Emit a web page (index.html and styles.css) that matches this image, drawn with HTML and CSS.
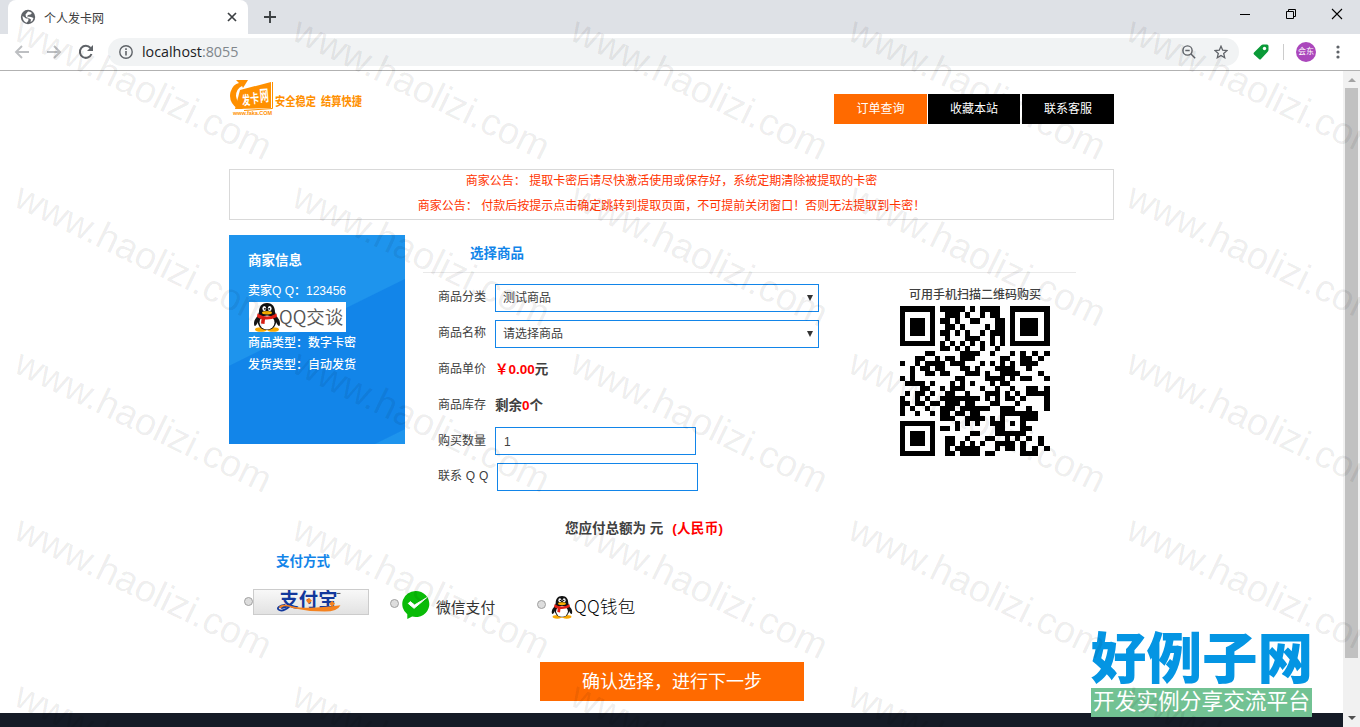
FILE: index.html
```html
<!DOCTYPE html>
<html lang="zh-CN">
<head>
    <meta charset="UTF-8">
    <title>个人发卡网</title>
    <link rel="stylesheet" href="styles.css">
</head>
<body>

<svg width="0" height="0" class="defs">
    <symbol id="penguin" viewBox="0 0 28 30">
        <ellipse cx="8" cy="27.5" rx="6" ry="2.3" fill="#f9a800"/>
        <ellipse cx="20" cy="27.5" rx="6" ry="2.3" fill="#f9a800"/>
        <path d="M6 13C2 16 0 20 1.500 24C3 24 4 22 5 20zM22 13C26 16 28 20 26.500 24C25 24 24 22 23 20z" fill="#151515"/>
        <path d="M14 1C8 1 6 5.500 6 10C3 17 4 28 14 28C24 28 25 17 22 10C22 5.500 20 1 14 1z" fill="#111"/>
        <ellipse cx="14" cy="20.500" rx="7.500" ry="7" fill="#fff"/>
        <ellipse cx="11.300" cy="6.500" rx="1.900" ry="2.500" fill="#fff"/>
        <ellipse cx="16.700" cy="6.500" rx="1.900" ry="2.500" fill="#fff"/>
        <circle cx="11.900" cy="6.800" r=".9"/><circle cx="16.200" cy="6.800" r=".9"/>
        <ellipse cx="14" cy="10.800" rx="5" ry="1.700" fill="#fbb100"/>
        <path d="M4.500 11.500Q14 17.500 23.500 11.500L24 15Q18 18 12 17.500L11.500 22L8 21.500L8.500 17Q6 16.500 4 15z" fill="#e21f14"/>
    </symbol>
</svg>

<div class="tabstrip">
    <div class="tab">
        <svg class="globe" viewBox="0 0 16 16"><circle cx="8" cy="8" r="7.200" fill="#5f6368"/><path d="M2.500 7Q4 7.500 6 9.500H8.500Q9 12 6.500 13.700Q2.500 12 2.500 7zM8 2.500Q10 2.200 12 4L10.500 5.500L8 6L7 7.500L11 8L13.500 9Q13 12 10.500 13L11 10.500L9 9.300L6 8L5.500 5.500z" fill="#fff"/></svg>
        <span class="tab-title">个人发卡网</span>
        <svg class="tab-close" viewBox="0 0 10 10"><path d="M1 1L9 9M9 1L1 9" stroke="#3c4043" stroke-width="1.700"/></svg>
    </div>
    <svg class="tab-new" viewBox="0 0 12 12"><path d="M6 0V12M0 6H12" stroke="#3c4043" stroke-width="1.900"/></svg>
    <div class="window-buttons">
        <svg viewBox="0 0 12 12"><path d="M1 6.500H11" stroke="#000"/></svg>
        <svg viewBox="0 0 12 12"><path d="M1.500 3.500H8.500V10.500H1.500zM3.500 3V1.500H10.500V8.500H9" fill="none" stroke="#000"/></svg>
        <svg viewBox="0 0 12 12"><path d="M1 1L11 11M11 1L1 11" stroke="#000" stroke-width="1.100"/></svg>
    </div>
</div>

<div class="toolbar">
    <svg class="nav-icon" viewBox="0 0 16 16"><path d="M15 8H2M8 2L2 8L8 14" fill="none" stroke="#bdbfc2" stroke-width="1.900"/></svg>
    <svg class="nav-icon" viewBox="0 0 16 16"><path d="M1 8H14M8 2L14 8L8 14" fill="none" stroke="#bdbfc2" stroke-width="1.900"/></svg>
    <svg class="nav-icon" viewBox="0 0 16 16"><path d="M13.500 10A6 6 0 1 1 12.500 4" fill="none" stroke="#5f6368" stroke-width="2"/><path d="M15 1V7H9z" fill="#5f6368"/></svg>
    <div class="address">
        <svg class="info" viewBox="0 0 14 14"><circle cx="7" cy="7" r="6.200" fill="none" stroke="#5f6368" stroke-width="1.400"/><path d="M7 6V10.500M7 3.300V4.900" stroke="#5f6368" stroke-width="1.600"/></svg>
        <span class="url">localhost<span>:8055</span></span>
        <svg class="zoom-out" viewBox="0 0 14 14"><circle cx="5.500" cy="5.500" r="4.600" fill="none" stroke="#5f6368" stroke-width="1.400"/><path d="M9 9L13.200 13.200M3.300 5.500H7.700" stroke="#5f6368" stroke-width="1.400"/></svg>
        <svg class="star" viewBox="0 0 14 14"><path d="M7 1.200L8.700 5.200L13 5.600L9.700 8.400L10.700 12.700L7 10.400L3.300 12.700L4.300 8.400L1 5.600L5.300 5.200z" fill="none" stroke="#5f6368" stroke-width="1.300"/></svg>
    </div>
    <svg class="tag" viewBox="0 0 16 16"><path d="M8 1.500Q9 .5 10 .5H14Q15.500 .5 15.500 2V6Q15.500 7 14.500 8L8 15Q7 16 6 15L1 10.500Q0 9.500 1 8.500z" fill="#0b9a38"/><circle cx="11.500" cy="4.500" r="1.700" fill="#fff"/></svg>
    <span class="divider"></span>
    <span class="avatar">会东</span>
    <svg class="menu-dots" viewBox="0 0 4 14"><g fill="#5f6368"><circle cx="2" cy="2" r="1.600"/><circle cx="2" cy="7" r="1.600"/><circle cx="2" cy="12" r="1.600"/></g></svg>
</div>

<div class="viewport">
    <div class="page">
        <div class="container">
            <div class="header">
                <svg class="logo" viewBox="0 0 134 40">
                    <path d="M11 12L42 4V30L6 31z" fill="#ff9000"/>
                    <path d="M43.500 4V30.500L15 32.500" fill="none" stroke="#ff9000"/>
                    <path d="M9 31Q-1 24 1.500 14Q4 6 10 5L7 2L19 2L14 10L13 8Q7 11 7 18Q8 25 14 31z" fill="#ff9000"/>
                    <g transform="rotate(-5 28 20)" fill="#fff" font-weight="bold"><text x="13" y="26" font-size="13" textLength="8" lengthAdjust="spacingAndGlyphs">发</text><text x="21" y="25" font-size="13" textLength="9" lengthAdjust="spacingAndGlyphs">卡</text><text x="31" y="24" font-size="16" textLength="9" lengthAdjust="spacingAndGlyphs">网</text></g>
                    <text x="4" y="37" class="logo-url" textLength="39">www.faka.COM</text>
                    <text x="46" y="28" class="logo-text" textLength="41" lengthAdjust="spacingAndGlyphs">安全稳定</text>
                    <text x="92" y="28" class="logo-text" textLength="41" lengthAdjust="spacingAndGlyphs">结算快捷</text>
                </svg>
                <div class="menu">
                    <a class="active">订单查询</a>
                    <a>收藏本站</a>
                    <a>联系客服</a>
                </div>
            </div>

            <div class="notice">
                <p>商家公告： 提取卡密后请尽快激活使用或保存好，系统定期清除被提取的卡密</p>
                <p class="second">商家公告： 付款后按提示点击确定跳转到提取页面，不可提前关闭窗口！否则无法提取到卡密！</p>
            </div>

            <div class="main">
                <div class="seller">
                    <h3>商家信息</h3>
                    <p>卖家Q Q：123456</p>
                    <div class="qq-chat"><svg><use href="#penguin"/></svg><span>QQ交谈</span></div>
                    <p>商品类型：数字卡密</p>
                    <p>发货类型：自动发货</p>
                </div>

                <div class="order">
                    <h3>选择商品</h3>
                    <div class="order-body">
                        <div class="fields">
                            <div class="row"><label>商品分类</label><div class="select"><span>测试商品</span><i></i></div></div>
                            <div class="row"><label>商品名称</label><div class="select"><span>请选择商品</span><i></i></div></div>
                            <div class="row"><label>商品单价</label><b><em>￥0.00</em>元</b></div>
                            <div class="row"><label>商品库存</label><b>剩余<em>0</em>个</b></div>
                            <div class="row"><label>购买数量</label><div class="input">1</div></div>
                            <div class="row qq"><label>联系 Q Q</label><div class="input"></div></div>
                        </div>
                        <div class="qr">
                            <span>可用手机扫描二维码购买</span>
                            <svg id="qrcode" viewBox="0 0 150 150" shape-rendering="crispEdges"></svg>
                        </div>
                    </div>
                </div>
            </div>

            <div class="total">您应付总额为 元<em>(人民币)</em></div>

            <h3 class="pay-title">支付方式</h3>
            <div class="pay">
                <span class="radio alipay-radio"></span>
                <div class="alipay">
                    <svg viewBox="0 0 116 26">
                        <text x="26" y="17.500" class="alipay-text" textLength="59" lengthAdjust="spacingAndGlyphs">支付宝</text>
                        <path d="M32 15Q22 17 25 20Q29 23 37 16" fill="none" stroke="#12389c" stroke-width="1.800"/>
                        <path d="M25 18Q27 13 39 16.500Q55 20 88 15.500Q85 22 72 22Q56 22 40 18.500Q31 15 28 18z" fill="#f5821f"/>
                        <path d="M56 8L59 11L56 14L53 11zM79.500 11L82.500 14L79.500 17L76.500 14z" fill="#f5821f"/>
                        <path d="M84 3.500H88" stroke="#333" stroke-width=".8"/>
                    </svg>
                </div>
                <span class="radio wechat-radio"></span>
                <svg class="wechat" viewBox="0 0 30 30"><path d="M14.500 1A14 13.500 0 1 1 11 27.500L6 30V25A14 13.500 0 0 1 14.500 1z" fill="#09bb07"/><path d="M7 14L13 19L26 8L13.500 15.500L9 12z" fill="#fff" stroke="#fff"/></svg>
                <span class="wechat-text">微信支付</span>
                <span class="radio qq-radio"></span>
                <svg class="qq-icon"><use href="#penguin"/></svg>
                <span class="qq-text">QQ钱包</span>
            </div>

            <button class="submit">确认选择，进行下一步</button>
        </div>
        <div class="footer"></div>
    </div>
    <div class="scrollbar">
        <i class="up"></i>
        <div class="thumb"></div>
        <i class="down"></i>
    </div>
</div>

<div class="site-mark">
    <svg class="mark-name" viewBox="0 0 224 60"><text x="-3" y="50" textLength="230" lengthAdjust="spacingAndGlyphs">好例子网</text></svg>
    <div class="mark-slogan">开发实例分享交流平台</div>
</div>

<svg class="watermark" id="watermark" width="1360" height="727"></svg>

<script src="script.js"></script>
</body>
</html>
```

FILE: styles.css
```css
* {
    box-sizing: border-box;
}

body {
    margin: 0;
    width: 1360px;
    height: 727px;
    overflow: hidden;
    display: flex;
    flex-direction: column;
    font: 12px "Liberation Sans", "Noto Sans CJK SC", sans-serif;
    color: #404040;
    background: #fff;
}

h3, p {
    margin: 0;
}

svg {
    display: block;
    flex: none;
}

em {
    font-style: normal;
    color: #f00;
}

.defs {
    position: absolute;
}

/* browser window */
.tabstrip {
    height: 34px;
    flex: none;
    display: flex;
    align-items: center;
    padding-left: 8px;
    background: #dee1e6;
}

.tab {
    width: 240px;
    height: 34px;
    display: flex;
    align-items: center;
    padding: 0 11px 0 12px;
    border-radius: 8px 8px 0 0;
    background: #fff;
}

.globe {
    width: 16px;
    height: 16px;
}

.tab-title {
    flex: 1;
    margin-left: 8px;
}

.tab-close {
    width: 10px;
    height: 10px;
}

.tab-new {
    width: 12px;
    height: 12px;
    margin-left: 16px;
}

.window-buttons {
    display: flex;
    gap: 34px;
    margin: -6px 17px 0 auto;
}

.window-buttons svg {
    width: 12px;
    height: 12px;
}

.toolbar {
    height: 37px;
    flex: none;
    display: flex;
    align-items: center;
    padding-left: 14px;
    border-bottom: 1px solid #b2b2b2;
}

.nav-icon {
    width: 16px;
    height: 16px;
    margin-right: 16px;
}

.address {
    width: 1131px;
    height: 28px;
    margin-left: -2px;
    display: flex;
    align-items: center;
    padding: 0 11px;
    border-radius: 14px;
    background: #f1f3f4;
}

.info {
    width: 14px;
    height: 14px;
}

.url {
    flex: 1;
    margin: -2px 0 0 9px;
    font: 14.3px "Open Sans", sans-serif;
    color: #202124;
}

.url span {
    color: #80868b;
}

.zoom-out {
    width: 14px;
    height: 14px;
    margin-right: 18px;
}

.star {
    width: 14px;
    height: 14px;
}

.tag {
    width: 16px;
    height: 16px;
    margin-left: 14px;
}

.divider {
    width: 1px;
    height: 16px;
    margin: 0 12px 0 14px;
    background: #ccc;
}

.avatar {
    width: 20px;
    height: 20px;
    border-radius: 50%;
    background: #ab47bc;
    color: #fff;
    font-size: 8px;
    line-height: 20px;
    text-align: center;
}

.menu-dots {
    width: 4px;
    height: 14px;
    margin-left: 20px;
}

.viewport {
    height: 656px;
    display: flex;
}

.page {
    width: 1343px;
    display: flex;
    flex-direction: column;
}

.container {
    width: 885px;
    height: 642px;
    margin-left: 229px;
}

.footer {
    height: 14px;
    background: #151b26;
}

.scrollbar {
    width: 17px;
    display: flex;
    flex-direction: column;
    align-items: center;
    background: #f1f1f1;
}

.scrollbar i {
    border: 4px solid transparent;
}

.scrollbar .up {
    margin-top: 3px;
    border-bottom-color: #a3a3a3;
}

.thumb {
    width: 13px;
    height: 570px;
    margin-top: 6px;
    background: #c1c1c1;
}

.scrollbar .down {
    margin-top: 58px;
    border-top-color: #505050;
}

/* header */
.header {
    height: 98px;
    display: flex;
    justify-content: space-between;
    padding-top: 7px;
}

.logo {
    width: 134px;
    height: 40px;
}

.logo-text {
    font-size: 12.5px;
    font-weight: bold;
    fill: #ff9000;
}

.logo-url {
    font-size: 5.5px;
    font-weight: bold;
    fill: #ff9000;
}

.menu {
    display: flex;
    margin-top: 16px;
}

.menu a {
    width: 92px;
    height: 30px;
    margin-left: 2px;
    line-height: 30px;
    text-align: center;
    color: #fff;
    background: #000;
}

.menu a.active {
    width: 93px;
    margin-right: -1px;
    background: #ff6a00;
}

.notice {
    height: 51px;
    border: 1px solid #d9d9d9;
    text-align: center;
    line-height: 25px;
    color: #ff3300;
}

.notice p {
    height: 25px;
    margin-top: -1px;
}

.notice .second {
    margin-top: 0;
}

/* seller card and order form */
.main {
    display: flex;
    margin-top: 15px;
}

.seller {
    width: 176px;
    height: 209px;
    padding: 16px 20px 0 19px;
    color: #fff;
    background: linear-gradient(153.7deg, #1e94ed 44%, #1285e9 44.4%, #1285e9 94.8%, #1e94ed 95.2%);
}

.seller h3 {
    height: 29px;
    font-size: 13.5px;
    line-height: 20px;
}

.seller p {
    height: 22px;
    line-height: 22px;
    font-weight: 500;
}

.qq-chat {
    width: 97px;
    height: 30px;
    display: flex;
    align-items: center;
    margin-left: 1px;
    padding-left: 4px;
    background: #fff;
    color: #555;
    font: 350 18.5px "Noto Sans CJK SC", sans-serif;
    white-space: nowrap;
}

.qq-chat svg {
    width: 28px;
    height: 30px;
}

.qq-chat span {
    margin: -3px 0 0 -2px;
}

.order {
    width: 653px;
    margin-left: 18px;
}

.order h3 {
    height: 38px;
    padding-left: 47px;
    border-bottom: 1px solid #e9e9e9;
    line-height: 38px;
    font-size: 13.5px;
    color: #1285e9;
}

.order-body {
    display: flex;
    justify-content: space-between;
    padding: 7px 26px 0 15px;
}

.row {
    height: 35.8px;
    display: flex;
    align-items: center;
}

.row label {
    width: 57px;
    margin-top: -4px;
}

.row.qq label {
    width: 59px;
    word-spacing: 0.5px;
}

.row b {
    font-size: 13.5px;
    margin-top: -3px;
}

.select, .input {
    height: 28px;
    padding: 2px 6px 0 7px;
    border: 1px solid #1285e9;
    line-height: 25px;
}

.select {
    width: 324px;
    display: flex;
    justify-content: space-between;
    align-items: center;
    padding-right: 5px;
}

.select i {
    border: 3.5px solid transparent;
    border-top: 6px solid #333;
    border-bottom: 0;
    margin-top: -2px;
}

.input {
    width: 201px;
    padding-left: 8px;
}

.qr {
    width: 150px;
    padding-top: 5px;
    text-align: center;
}

.qr span {
    display: block;
    height: 21px;
    line-height: 20px;
    font-weight: 500;
}

#qrcode {
    width: 150px;
    height: 150px;
}

/* payment */
.total {
    margin: 24px 0 0 336px;
    height: 20px;
    line-height: 20px;
    font-size: 13.5px;
    font-weight: bold;
}

.total em {
    margin-left: 9px;
    letter-spacing: 0.3px;
}

.pay-title {
    margin: 13px 0 0 47px;
    height: 20px;
    line-height: 20px;
    font-size: 13.5px;
    color: #1285e9;
}

.pay {
    height: 40px;
    margin-top: 13px;
    padding-left: 15px;
    display: flex;
    align-items: center;
}

.radio {
    width: 9px;
    height: 9px;
    flex: none;
    border: 1px solid #a0a0a0;
    border-radius: 50%;
    background: #ddd;
}

.alipay-radio {
    margin-top: -6px;
}

.alipay {
    width: 116px;
    height: 26px;
    margin-top: -5px;
    border: 1px solid #ccc;
    background: linear-gradient(#f8f8f8, #e2e2e2);
}

.alipay-text {
    font-size: 19.5px;
    font-weight: bold;
    fill: #12389c;
}

.wechat-radio {
    margin: -2px 0 0 21px;
}

.wechat {
    width: 30px;
    height: 29px;
    margin-left: 2px;
}

.wechat-text {
    width: 60px;
    margin: 4px 0 0 5px;
    font-size: 14.8px;
    color: #333;
}

.qq-radio {
    margin-left: 41px;
}

.qq-icon {
    width: 22px;
    height: 24px;
    margin: 5px 0 0 5px;
}

.qq-text {
    margin: 1px 0 0 1px;
    font: 300 17.5px "Noto Sans CJK SC", sans-serif;
    letter-spacing: 0.3px;
    color: #000;
}

.submit {
    display: block;
    width: 264px;
    height: 39px;
    margin: 37px 0 0 311px;
    padding: 0 0 2px;
    border: 0;
    font: 18px "Noto Sans CJK SC", sans-serif;
    color: #fff;
    background: #ff6a00;
}

/* overlays */
.site-mark {
    position: absolute;
    left: 1090px;
    top: 630px;
    width: 224px;
}

.mark-name {
    width: 224px;
    height: 58px;
    overflow: visible;
    font-size: 57px;
    font-weight: 900;
    fill: #0495e3;
}

.mark-slogan {
    width: 221px;
    height: 29px;
    margin-left: 1px;
    background: #72c293;
    color: #fff;
    font-size: 21.7px;
    line-height: 27px;
    text-align: center;
    white-space: nowrap;
}

.watermark {
    position: absolute;
    left: 0;
    top: 0;
    font-size: 38px;
    fill: rgba(0, 0, 0, 0.075);
    pointer-events: none;
}
```

FILE: script.js
```js
// QR code, version 3, error level H (two blocks of 13 data + 22 check bytes)
function makeQr(text) {
    const size = 29;
    const bits = [];
    const push = (v, n) => { for (let i = n - 1; i >= 0; i--) bits.push(v >> i & 1); };
    push(4, 4);
    push(text.length, 8);
    for (const c of text) push(c.charCodeAt(0), 8);
    push(0, Math.min(4, 208 - bits.length));
    while (bits.length % 8) bits.push(0);
    const data = [];
    for (let i = 0; i < bits.length; i += 8) data.push(parseInt(bits.slice(i, i + 8).join(''), 2));
    for (let p = 0xec; data.length < 26; p ^= 0xec ^ 0x11) data.push(p);

    const exp = [], log = [];
    for (let i = 0, x = 1; i < 255; i++) {
        exp[i] = x;
        log[x] = i;
        x <<= 1;
        if (x > 255) x ^= 0x11d;
    }
    const mul = (a, b) => a && b ? exp[(log[a] + log[b]) % 255] : 0;
    let gen = [1];
    for (let i = 0; i < 22; i++) {
        const next = gen.concat(0);
        gen.forEach((g, j) => { next[j + 1] ^= mul(g, exp[i]); });
        gen = next;
    }
    const check = block => {
        const r = block.concat(Array(22).fill(0));
        for (let i = 0; i < block.length; i++) {
            const f = r[i];
            gen.forEach((g, j) => { r[i + j] ^= mul(g, f); });
        }
        return r.slice(block.length);
    };
    const a = data.slice(0, 13), b = data.slice(13);
    const ca = check(a), cb = check(b);
    const words = [];
    a.forEach((w, i) => words.push(w, b[i]));
    ca.forEach((w, i) => words.push(w, cb[i]));

    const masks = [
        (r, c) => (r + c) % 2 === 0,
        (r) => r % 2 === 0,
        (r, c) => c % 3 === 0,
        (r, c) => (r + c) % 3 === 0,
        (r, c) => ((r >> 1) + Math.floor(c / 3)) % 2 === 0,
        (r, c) => r * c % 2 + r * c % 3 === 0,
        (r, c) => (r * c % 2 + r * c % 3) % 2 === 0,
        (r, c) => ((r + c) % 2 + r * c % 3) % 2 === 0
    ];

    // a draft leaves the format bits light, it is only used to rate the mask
    const build = (mask, draft) => {
        const m = Array.from({ length: size }, () => Array(size).fill(null));
        const finder = (y, x) => {
            for (let r = -1; r < 8; r++) for (let c = -1; c < 8; c++) {
                if (m[y + r] === undefined || x + c < 0 || x + c >= size) continue;
                const d = Math.max(Math.abs(r - 3), Math.abs(c - 3));
                m[y + r][x + c] = d !== 2 && d !== 4;
            }
        };
        finder(0, 0);
        finder(0, size - 7);
        finder(size - 7, 0);
        for (let r = -2; r < 3; r++) for (let c = -2; c < 3; c++) {
            m[22 + r][22 + c] = Math.max(Math.abs(r), Math.abs(c)) !== 1;
        }
        for (let i = 8; i < size - 8; i++) m[6][i] = m[i][6] = i % 2 === 0;

        const f = 16 | mask;
        let rem = f;
        for (let i = 0; i < 10; i++) rem = rem << 1 ^ (rem >> 9) * 0x537;
        const format = (f << 10 | rem) ^ 0x5412;
        for (let i = 0; i < 15; i++) {
            const bit = !draft && (format >> i & 1) === 1;
            m[i < 6 ? i : i < 8 ? i + 1 : size - 15 + i][8] = bit;
            m[8][i < 8 ? size - 1 - i : i < 9 ? 7 : 14 - i] = bit;
        }
        m[size - 8][8] = !draft;

        let n = 0, up = true;
        for (let col = size - 1; col > 0; col -= 2) {
            if (col === 6) col--;
            for (let k = 0; k < size; k++) {
                const r = up ? size - 1 - k : k;
                for (const c of [col, col - 1]) {
                    if (m[r][c] !== null) continue;
                    const bit = n < 560 ? words[n >> 3] >> 7 - n % 8 & 1 : 0;
                    m[r][c] = (bit === 1) !== masks[mask](r, c);
                    n++;
                }
            }
            up = !up;
        }
        return m;
    };

    const penalty = m => {
        let score = 0, dark = 0;
        for (let r = 0; r < size; r++) for (let c = 0; c < size; c++) {
            let same = -1;
            for (let i = -1; i < 2; i++) for (let j = -1; j < 2; j++) {
                if (m[r + i] && m[r + i][c + j] === m[r][c]) same++;
            }
            if (same > 5) score += same - 2;
            dark += m[r][c];
            if (r && c && m[r][c] === m[r - 1][c] && m[r][c] === m[r][c - 1] && m[r][c] === m[r - 1][c - 1]) score += 3;
        }
        m.concat(m.map((_, i) => m.map(row => row[i]))).forEach(line => {
            const s = line.map(Number).join('');
            for (let i = 0; i < size - 6; i++) if (s.substr(i, 7) === '1011101') score += 40;
        });
        return score + Math.abs(100 * dark / size / size - 50) / 5 * 10;
    };

    const scores = masks.map((_, i) => penalty(build(i, true)));
    return build(scores.indexOf(Math.min(...scores)), false);
}

// 29 modules on 150px: the spare pixels go to the first rows and the last columns
const rowTop = i => i * 5 + Math.min(i, 5);
const colLeft = i => i * 5 + Math.max(i - 24, 0);
let path = '';
makeQr('http://localhost:8055/').forEach((row, y) => row.forEach((on, x) => {
    if (on) path += `M${colLeft(x)} ${rowTop(y)}H${colLeft(x + 1)}V${rowTop(y + 1)}H${colLeft(x)}z`;
}));
document.getElementById('qrcode').innerHTML = `<path d="${path}"/>`;

let marks = '';
for (let y = 39; y < 760; y += 166.3) {
    for (let x = 12; x < 1360; x += 278) {
        marks += `<text transform="translate(${x} ${y}) rotate(25.8)" textLength="280">www.haolizi.com</text>`;
    }
}
document.getElementById('watermark').innerHTML = marks;
```
